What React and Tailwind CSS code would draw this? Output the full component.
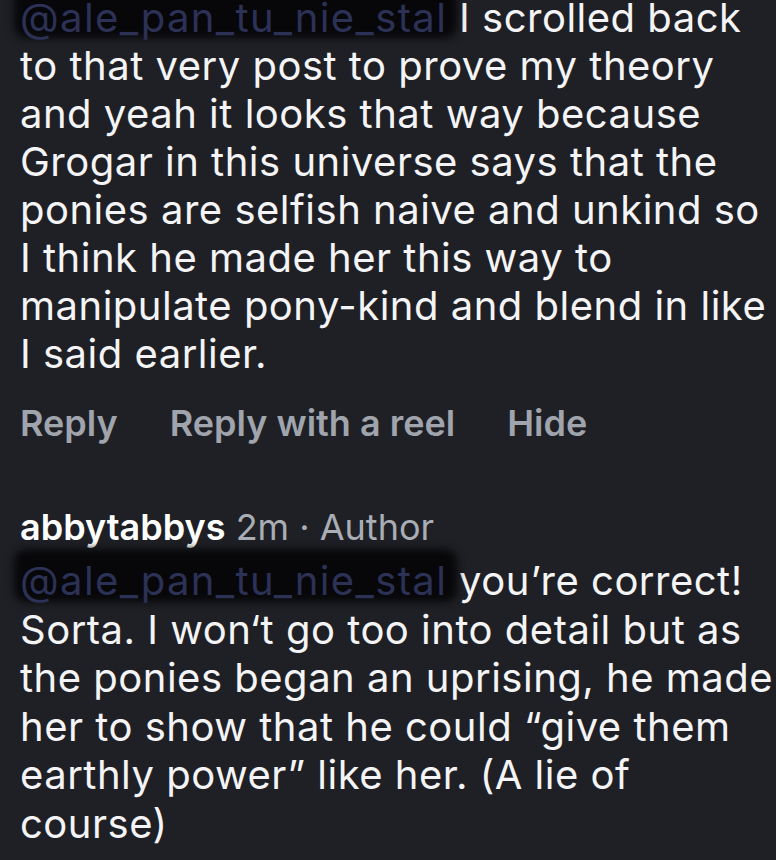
function Mention({ name }) {
  return (
    <span className="relative inline-block tracking-[1.4px]">
      <span className="absolute -left-[6px] -right-[10px] -top-[8px] bottom-[4px] rounded-[12px] bg-[#07070a] blur-[4px]" />
      <span className="relative text-[#2c3156]">{name}</span>
    </span>
  );
}

const first = [
  "to that very post to prove my theory",
  "and yeah it looks that way because",
  "Grogar in this universe says that the",
  "ponies are selfish naive and unkind so",
  "I think he made her this way to",
  "manipulate pony-kind and blend in like",
  "I said earlier.",
];

const second = [
  "Sorta. I won‘t go too into detail but as",
  "the ponies began an uprising, he made",
  "her to show that he could “give them",
  "earthly power” like her. (A lie of",
  "course)",
];

export default function App() {
  return (
    <div
      className="min-h-screen w-[776px] overflow-hidden bg-[#1f2025] text-[#f4f4f6]"
      style={{ fontFamily: "Inter, 'Liberation Sans', sans-serif" }}
    >
      <div className="px-[20px]">
        <div className="-mt-[6px] whitespace-nowrap text-[40px] leading-[48px] tracking-[0.5px]">
          <div>
            <Mention name="@ale_pan_tu_nie_stal" /> I scrolled back
          </div>
          {first.map((l) => (
            <div key={l}>{l}</div>
          ))}
        </div>

        <div className="mt-[25px] flex gap-[52px] text-[36px] font-semibold leading-[40px] text-[#9fa4ad]">
          <span>Reply</span>
          <span>Reply with a reel</span>
          <span>Hide</span>
        </div>

        <div className="mt-[64px] whitespace-nowrap text-[36px] leading-[40px]">
          <span className="font-semibold text-white">abbytabbys</span>
          <span className="text-[#a9adb5]"> 2m · Author</span>
        </div>

        <div className="mt-[10px] whitespace-nowrap text-[40px] leading-[48.6px] tracking-[0.5px]">
          <div>
            <Mention name="@ale_pan_tu_nie_stal" /> you’re correct!
          </div>
          {second.map((l) => (
            <div key={l}>{l}</div>
          ))}
        </div>
      </div>
    </div>
  );
}
